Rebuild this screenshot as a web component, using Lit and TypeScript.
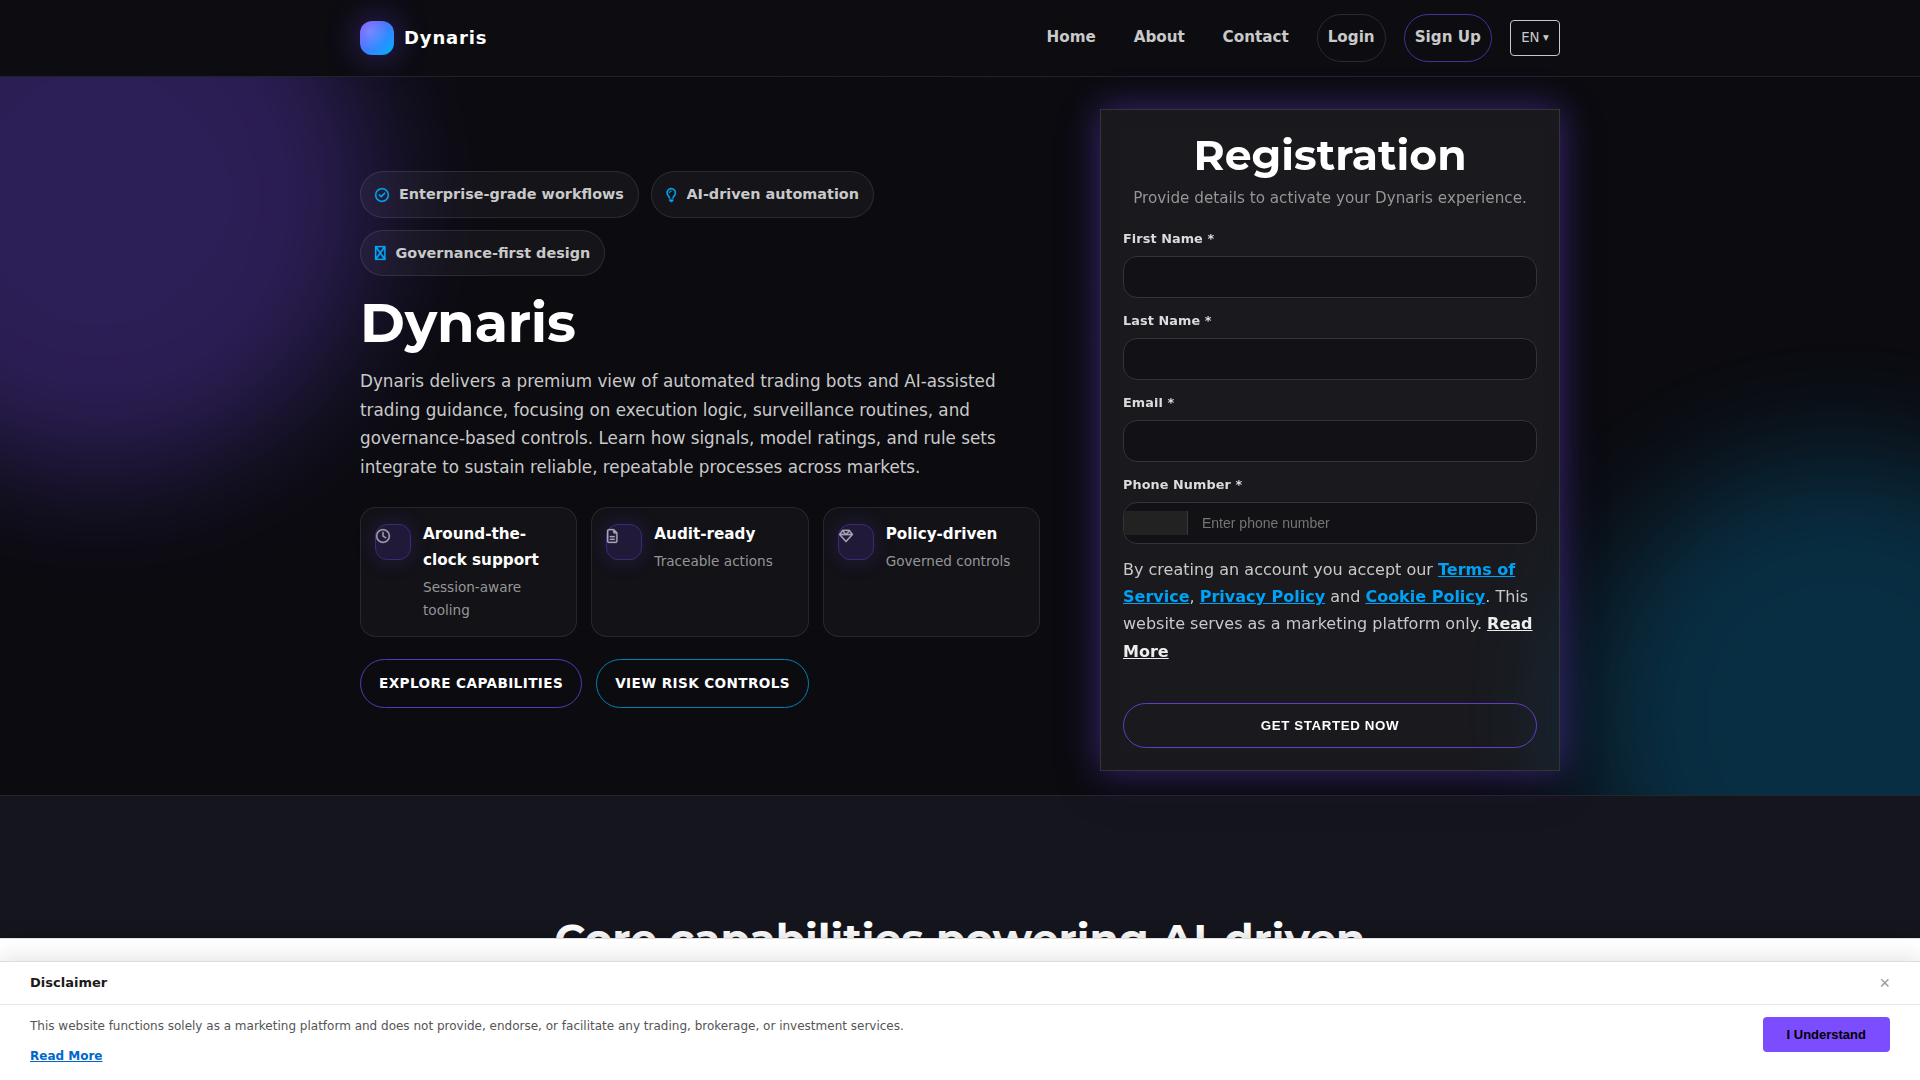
import { LitElement, html, svg, css } from "lit";
import { customElement } from "lit/decorators.js";

type Glyph = { w: number; d: string };

const GLYPHS: Record<string, Glyph> = {
  check: {
    w: 512,
    d: "M256 48a208 208 0 1 1 0 416 208 208 0 1 1 0-416zm0 464A256 256 0 1 0 256 0a256 256 0 1 0 0 512zM369 209c9.4-9.4 9.4-24.6 0-33.9s-24.6-9.4-33.9 0l-111 111-47-47c-9.4-9.4-24.6-9.4-33.9 0s-9.4 24.6 0 33.9l64 64c9.4 9.4 24.6 9.4 33.9 0L369 209z",
  },
  bulb: {
    w: 384,
    d: "M297.2 248.9C311.6 228.3 320 203.2 320 176c0-70.7-57.3-128-128-128S64 105.3 64 176c0 27.2 8.4 52.3 22.8 72.9c3.7 5.3 8.1 11.3 12.8 17.7c12.9 17.7 28.3 38.9 39.8 59.8c10.4 19 15.7 38.8 18.3 57.5H109c-2.2-12-5.9-23.7-11.8-34.5c-9.9-18-22.2-34.9-34.5-51.8c-5.2-7.1-10.4-14.2-15.4-21.4C27.6 247.9 16 213.3 16 176C16 78.8 94.8 0 192 0s176 78.8 176 176c0 37.3-11.6 71.9-31.4 100.3c-5 7.2-10.2 14.3-15.4 21.4c-12.3 16.8-24.6 33.7-34.5 51.8c-5.9 10.8-9.6 22.5-11.8 34.5H226.4c2.6-18.7 7.9-38.6 18.3-57.5c11.5-20.9 26.9-42.1 39.8-59.8c4.7-6.4 9-12.4 12.7-17.7zM192 128c-26.5 0-48 21.5-48 48c0 8.8-7.2 16-16 16s-16-7.2-16-16c0-44.2 35.8-80 80-80c8.8 0 16 7.2 16 16s-7.2 16-16 16zm0 384c-44.2 0-80-35.8-80-80V416H272v16c0 44.2-35.8 80-80 80z",
  },
  crossed: {
    w: 384,
    d: "M0 0H384V512H0zM76 48L192 208L308 48zM48 108V404L160 256zM336 108V404L224 256zM76 464H308L192 304z",
  },
  clock: {
    w: 512,
    d: "M464 256A208 208 0 1 1 48 256a208 208 0 1 1 416 0zM0 256a256 256 0 1 0 512 0A256 256 0 1 0 0 256zM232 120V256c0 8 4 15.5 10.7 20l96 64c11 7.4 25.9 4.4 33.3-6.7s4.4-25.9-6.7-33.3L280 243.2V120c0-13.3-10.7-24-24-24s-24 10.7-24 24z",
  },
  file: {
    w: 384,
    d: "M64 464c-8.8 0-16-7.2-16-16V64c0-8.8 7.2-16 16-16H224v80c0 17.7 14.3 32 32 32h80V448c0 8.8-7.2 16-16 16H64zM64 0C28.7 0 0 28.7 0 64V448c0 35.3 28.7 64 64 64H320c35.3 0 64-28.7 64-64V154.5c0-17-6.7-33.3-18.7-45.3L274.7 18.7C262.7 6.7 246.5 0 229.5 0H64zm56 256c-13.3 0-24 10.7-24 24s10.7 24 24 24H264c13.3 0 24-10.7 24-24s-10.7-24-24-24H120zm0 96c-13.3 0-24 10.7-24 24s10.7 24 24 24H264c13.3 0 24-10.7 24-24s-10.7-24-24-24H120z",
  },
  gem: {
    w: 512,
    d: "M168.5 72L256 165l87.5-93h-175zM383.9 99.1L311.5 176h129L383.9 99.1zm50 124.9H256 78.1L256 420.3 433.9 224zM71.5 176h129L128.1 99.1 71.5 176zm434.3 40.1l-232 256c-4.5 5-11 7.9-17.8 7.9s-13.2-2.9-17.8-7.9l-232-256c-7.7-8.5-8.3-21.2-1.5-30.4l112-152c4.5-6.1 11.7-9.8 19.3-9.8H376c7.6 0 14.8 3.6 19.3 9.8l112 152c6.8 9.2 6.1 21.9-1.5 30.4z",
  },
};

const icon = (name: string, size: number) => {
  const g = GLYPHS[name];
  return html`<svg class="glyph" width=${(g.w / 512) * size} height=${size} viewBox="0 0 ${g.w} 512" fill="currentColor">
    ${svg`<path fill-rule=${name === "crossed" ? "evenodd" : "nonzero"} d=${g.d} />`}
  </svg>`;
};

const PILLS = [
  { icon: "check", text: "Enterprise-grade workflows" },
  { icon: "bulb", text: "AI-driven automation" },
  { icon: "crossed", text: "Governance-first design" },
];

const FEATURES = [
  { icon: "clock", title: "Around-the-clock support", text: "Session-aware tooling" },
  { icon: "file", title: "Audit-ready", text: "Traceable actions" },
  { icon: "gem", title: "Policy-driven", text: "Governed controls" },
];

@customElement("app-root")
export class AppRoot extends LitElement {
  static styles = css`
    :host {
      display: block;
      height: 1080px;
      overflow: hidden;
      position: relative;
      background: #0b0b10;
      color: #c9c9c9;
      font: 16px/1.7 "DejaVu Sans", sans-serif;
    }
    * {
      box-sizing: border-box;
    }
    a {
      color: inherit;
      text-decoration: none;
    }
    .glyph {
      display: block;
      flex: none;
      overflow: visible;
      stroke: currentColor;
      stroke-width: 10px;
    }
    .wrap {
      width: 1200px;
      margin: 0 auto;
    }
    .header {
      position: relative;
      border-bottom: 1px solid #232327;
      background: #0c0c11;
    }
    .bar {
      display: flex;
      justify-content: space-between;
      align-items: center;
      padding: 14px 0;
    }
    .brand {
      display: flex;
      align-items: center;
      gap: 10px;
      color: #fff;
      font-size: 18px;
      font-weight: 700;
      letter-spacing: 0.048em;
    }
    .mark {
      width: 34px;
      height: 34px;
      border-radius: 12px;
      background: radial-gradient(circle at 30% 30%, rgba(255, 255, 255, 0.2), transparent 55%),
        linear-gradient(135deg, #7c4dff, #00b0ff);
      box-shadow: 0 0 34px rgba(124, 77, 255, 0.45);
    }
    .nav {
      display: flex;
      align-items: center;
      gap: 18px;
      font-size: 15.2px;
      font-weight: 700;
    }
    .link {
      padding: 10.6px 9.9px 11.4px;
    }
    .link.boxed {
      padding: 9.6px 10px 10.4px;
      border: 1px solid #2a2a2f;
      border-radius: 24px;
    }
    .link.accent {
      border-color: #46309a;
    }
    .lang {
      height: 36px;
      width: 50px;
      border: 1px solid #c9c9c9;
      border-radius: 4px;
      display: flex;
      align-items: center;
      justify-content: center;
      gap: 3.5px;
      font-size: 13.33px;
      font-weight: 400;
    }
    .caret {
      font-size: 11.5px;
    }
    .hero {
      position: relative;
      z-index: 1;
      padding: 32px 0 24.2px;
    }
    .backdrop {
      position: absolute;
      inset: 0;
      overflow: hidden;
    }
    .blob {
      position: absolute;
      border-radius: 50%;
      filter: blur(60px);
    }
    .violet {
      left: -180px;
      top: -160px;
      width: 560px;
      height: 560px;
      background: #7c4dff;
      opacity: 0.29;
    }
    .cyan {
      right: -180px;
      bottom: -180px;
      width: 520px;
      height: 520px;
      background: #00b0ff;
      opacity: 0.21;
    }
    .mesh {
      position: absolute;
      inset: 0;
      background: linear-gradient(90deg, rgba(255, 255, 255, 0.05) 1px, transparent 1px) 0 0 / 52px 52px,
        linear-gradient(rgba(255, 255, 255, 0.05) 1px, transparent 1px) 0 0 / 52px 52px;
      mask-image: radial-gradient(circle at 60% 35%, rgba(0, 0, 0, 0.4), transparent 50%);
      opacity: 0.5;
    }
    .columns {
      position: relative;
      display: grid;
      grid-template-columns: 680px 460px;
      gap: 60px;
      align-items: center;
    }
    .pills {
      display: flex;
      flex-wrap: wrap;
      gap: 12px;
    }
    .pill {
      display: flex;
      align-items: center;
      gap: 10px;
      padding: 10px 14px;
      border: 1px solid rgba(255, 255, 255, 0.1);
      border-radius: 24px;
      background: rgba(255, 255, 255, 0.04);
      font-size: 14.4px;
      font-weight: 700;
    }
    .pill .glyph {
      color: #00a8fa;
    }
    h1,
    h2 {
      margin: 0;
      color: #fff;
      font-family: Montserrat, "Open Sans", sans-serif;
      font-weight: 700;
      line-height: 1.1;
    }
    h1 {
      margin-top: 17px;
      font-size: 54.4px;
      letter-spacing: -0.2px;
    }
    h2 {
      font-size: 42.5px;
      text-align: center;
    }
    .lead {
      margin: 14px 0 26px;
      font-size: 16.8px;
    }
    .features {
      display: grid;
      grid-template-columns: repeat(3, 1fr);
      gap: 14px;
    }
    .feature {
      display: flex;
      gap: 12px;
      padding: 14px;
      border: 1px solid rgba(255, 255, 255, 0.09);
      border-radius: 16px;
      background: rgba(255, 255, 255, 0.03);
    }
    .chip {
      flex: none;
      width: 36px;
      height: 36px;
      margin-top: 2px;
      padding-top: 4px;
      border: 1px solid #3d2975;
      border-radius: 12px;
      background: #211938;
      box-shadow: 0 0 22px rgba(124, 77, 255, 0.2);
      color: #a8a4b2;
    }
    .feature-title {
      color: #fff;
      font-size: 15.2px;
      font-weight: 700;
    }
    .feature-text {
      margin-top: 2px;
      color: #969697;
      font-size: 13.6px;
    }
    .actions {
      display: flex;
      gap: 14px;
      margin-top: 22px;
    }
    .action {
      padding: 12px 18px 11.8px;
      border: 1px solid #5a38b5;
      border-radius: 25px;
      color: #fff;
      font-size: 13.6px;
      font-weight: 700;
      letter-spacing: 0.029em;
      white-space: nowrap;
    }
    .action.cool {
      border-color: #057fb8;
    }
    .card {
      padding: 22px;
      border: 1px solid #333338;
      background: rgba(255, 255, 255, 0.06);
      backdrop-filter: blur(10px);
      box-shadow: 0 0 34px rgba(124, 77, 255, 0.45), 0 10px 40px rgba(0, 0, 0, 0.4);
    }
    .card-sub {
      margin: 7px 0 16.7px;
      color: #969697;
      font-size: 15.2px;
      text-align: center;
    }
    .label {
      display: block;
      height: 22px;
      margin-bottom: 6px;
      color: #dcdcdc;
      font-size: 12.8px;
      font-weight: 700;
      letter-spacing: 0.09px;
    }
    .field {
      display: flex;
      align-items: center;
      height: 42px;
      margin-bottom: 12px;
      border: 1px solid #343438;
      border-radius: 14px;
      background: #121216;
      overflow: hidden;
    }
    .prefix {
      width: 64px;
      height: 24px;
      border-right: 1px solid #3a3a3e;
      background: #222223;
    }
    .placeholder {
      padding-left: 14px;
      color: #757575;
      font: 14px "Liberation Sans", sans-serif;
    }
    .terms {
      margin: 0 0 38px;
    }
    .terms a {
      color: #00a2f5;
      font-weight: 700;
      text-decoration: underline;
    }
    .terms .more {
      color: #ededed;
    }
    .submit {
      display: flex;
      align-items: center;
      justify-content: center;
      height: 45px;
      border: 1px solid #633cc8;
      border-radius: 23px;
      color: #fff;
      font: 700 13.33px "Liberation Sans", sans-serif;
      letter-spacing: 0.6px;
    }
    .core {
      height: 300px;
      padding-top: 120px;
      border-top: 1px solid #25252d;
      background: #15151e;
    }
    .notice {
      position: absolute;
      left: 0;
      right: 0;
      bottom: 0;
      z-index: 5;
      height: 142px;
      padding-top: 22px;
      border-top: 1px solid #e0e0e0;
      background: #fff;
      color: #555;
      box-shadow: 0 -2px 16px rgba(0, 0, 0, 0.15);
      font-size: 12px;
    }
    .panel {
      height: 119px;
      border-top: 1px solid #ddd;
      background: #fff;
      box-shadow: 0 -4px 20px rgba(0, 0, 0, 0.11);
    }
    .panel-head {
      display: flex;
      align-items: center;
      justify-content: space-between;
      height: 43px;
      padding: 0 30px;
      border-bottom: 1px solid #e8e8e8;
    }
    .panel-title {
      color: #1a1a1a;
      font-size: 13px;
      font-weight: 700;
    }
    .close {
      color: #999;
      font: 18px/1 "Liberation Sans", sans-serif;
    }
    .panel-body {
      display: flex;
      justify-content: space-between;
      align-items: flex-start;
      padding: 12px 30px 0;
      line-height: 19px;
    }
    .panel-link {
      display: inline-block;
      margin-top: 11px;
      color: #0066cc;
      font-weight: 700;
      text-decoration: underline;
    }
    .agree {
      padding: 10px 24px;
      border-radius: 4px;
      background: #7c4dff;
      color: #000;
      font: 700 13px/15px "Liberation Sans", sans-serif;
    }
  `;

  render() {
    return html`
      <header class="header">
        <div class="wrap bar">
          <a class="brand"><span class="mark"></span>Dynaris</a>
          <nav class="nav">
            <a class="link">Home</a>
            <a class="link">About</a>
            <a class="link">Contact</a>
            <a class="link boxed">Login</a>
            <a class="link boxed accent">Sign Up</a>
            <span class="lang">EN <span class="caret">▾</span></span>
          </nav>
        </div>
      </header>

      <section class="hero">
        <div class="backdrop">
          <div class="blob violet"></div>
          <div class="blob cyan"></div>
          <div class="mesh"></div>
        </div>
        <div class="wrap columns">
          <div>
            <div class="pills">
              ${PILLS.map((p) => html`<div class="pill">${icon(p.icon, 14)}<span>${p.text}</span></div>`)}
            </div>
            <h1>Dynaris</h1>
            <p class="lead">
              Dynaris delivers a premium view of automated trading bots and AI-assisted trading guidance, focusing on
              execution logic, surveillance routines, and governance-based controls. Learn how signals, model ratings,
              and rule sets integrate to sustain reliable, repeatable processes across markets.
            </p>
            <div class="features">
              ${FEATURES.map(
                (f) => html`<div class="feature">
                  <div class="chip">${icon(f.icon, 14)}</div>
                  <div>
                    <div class="feature-title">${f.title}</div>
                    <div class="feature-text">${f.text}</div>
                  </div>
                </div>`
              )}
            </div>
            <div class="actions">
              <a class="action">EXPLORE CAPABILITIES</a>
              <a class="action cool">VIEW RISK CONTROLS</a>
            </div>
          </div>

          <div class="card">
            <h2>Registration</h2>
            <p class="card-sub">Provide details to activate your Dynaris experience.</p>
            ${["First Name *", "Last Name *", "Email *"].map(
              (l) => html`<span class="label">${l}</span>
                <div class="field"></div>`
            )}
            <span class="label">Phone Number *</span>
            <div class="field"><span class="prefix"></span><span class="placeholder">Enter phone number</span></div>
            <p class="terms">
              By creating an account you accept our <a>Terms of Service</a>, <a>Privacy Policy</a> and
              <a>Cookie Policy</a>. This website serves as a marketing platform only. <a class="more">Read More</a>
            </p>
            <div class="submit">GET STARTED NOW</div>
          </div>
        </div>
      </section>

      <section class="core"><h2>Core capabilities powering AI-driven</h2></section>

      <aside class="notice">
        <div class="panel">
          <div class="panel-head"><span class="panel-title">Disclaimer</span><span class="close">×</span></div>
          <div class="panel-body">
            <div>
              <div>
                This website functions solely as a marketing platform and does not provide, endorse, or facilitate any
                trading, brokerage, or investment services.
              </div>
              <a class="panel-link">Read More</a>
            </div>
            <div class="agree">I Understand</div>
          </div>
        </div>
      </aside>
    `;
  }
}
